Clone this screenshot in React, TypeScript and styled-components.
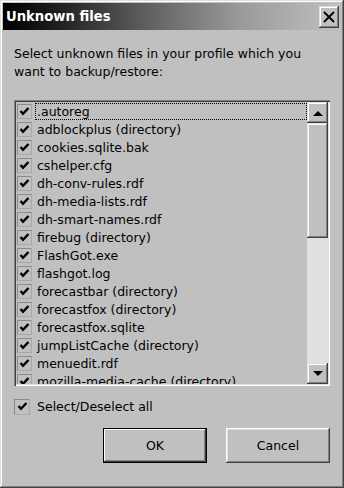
import React from 'react'
import styled, { createGlobalStyle } from 'styled-components'

const GlobalStyle = createGlobalStyle`
    html, body {
        margin: 0;
        padding: 0;
        background: #c0c0c0;
    }
    * { box-sizing: border-box; }
`

const raised = `
    box-shadow: inset -1px -1px #404040, inset 1px 1px #dfdfdf, inset -2px -2px #808080, inset 2px 2px #ffffff;
`

const Window = styled.div`
    width: 344px;
    height: 488px;
    padding: 3px;
    background: #c0c0c0;
    display: flex;
    flex-direction: column;
    font-family: "DejaVu Sans", "Liberation Sans", sans-serif;
    font-size: 12.5px;
    color: #000;
    ${raised}
`

const TitleBar = styled.div`
    height: 27px;
    display: flex;
    align-items: center;
    justify-content: space-between;
    padding: 0 2px 0 3px;
    background: linear-gradient(to right, #000000 0%, #1c1c1c 15%, #5a5a5a 40%, #9a9a9a 70%, #c0c0c0 100%);
`

const Title = styled.span`
    color: #fff;
    font-weight: bold;
    font-size: 13.2px;
`

const CloseButton = styled.div`
    width: 20px;
    height: 22px;
    background: #c0c0c0;
    display: flex;
    align-items: center;
    justify-content: center;
    ${raised}
`

const Content = styled.div`
    flex: 1;
    display: flex;
    flex-direction: column;
    padding: 15px 11px 0 11px;
`

const Prompt = styled.p`
    margin: 0;
    line-height: 18px;
`

const ListBox = styled.div`
    margin-top: 19px;
    height: 286px;
    padding: 2px;
    display: flex;
    box-shadow: inset 1px 1px #808080, inset 2px 2px #404040, inset -1px -1px #ffffff, inset -2px -2px #dfdfdf;
`

const Rows = styled.div`
    flex: 1;
    overflow: hidden;
`

const Row = styled.div`
    height: 18px;
    display: flex;
    align-items: center;
    padding-left: 1px;
`

const Box = styled.span<{ $size?: number }>`
    width: ${p => p.$size ?? 15}px;
    height: ${p => p.$size ?? 15}px;
    flex: none;
    display: flex;
    align-items: center;
    justify-content: center;
    border: 1px solid #8c8c8c;
    border-right-color: #a8a8a8;
    border-bottom-color: #a8a8a8;
`

const Label = styled.span<{ $focused?: boolean }>`
    flex: 1;
    height: 17px;
    margin-left: 3px;
    padding-left: 1px;
    display: flex;
    align-items: center;
    white-space: nowrap;
    border: 1px dotted ${p => (p.$focused ? '#000' : 'transparent')};
`

const ScrollBar = styled.div`
    width: 21px;
    display: flex;
    flex-direction: column;
`

const ScrollButton = styled.div`
    height: 21px;
    flex: none;
    background: #c0c0c0;
    display: flex;
    align-items: center;
    justify-content: center;
    ${raised}
`

const Thumb = styled.div`
    height: 115px;
    flex: none;
    background: #c0c0c0;
    ${raised}
`

const Track = styled.div`
    flex: 1;
    background: #e0e0e0;
`

const SelectAll = styled.div`
    margin-top: 12px;
    height: 17px;
    display: flex;
    align-items: center;
    gap: 7px;
`

const Buttons = styled.div`
    margin-top: 13px;
    display: flex;
    justify-content: flex-end;
    gap: 19px;
`

const Button = styled.div<{ $default?: boolean }>`
    width: 104px;
    height: 35px;
    display: flex;
    align-items: center;
    justify-content: center;
    background: #c0c0c0;
    box-shadow: ${p =>
        p.$default
            ? 'inset 0 0 0 1px #000, inset -2px -2px #404040, inset 2px 2px #ffffff, inset -3px -3px #808080'
            : 'inset -1px -1px #404040, inset 1px 1px #ffffff, inset -2px -2px #808080, inset 2px 2px #dfdfdf'};
`

const Check = () => (
    <svg width="11" height="11" viewBox="0 0 11 11">
        <path d="M1.5 5 L4 7.8 L9.5 2" fill="none" stroke="#000" strokeWidth="2.4" />
    </svg>
)

const files = [
    '.autoreg',
    'adblockplus (directory)',
    'cookies.sqlite.bak',
    'cshelper.cfg',
    'dh-conv-rules.rdf',
    'dh-media-lists.rdf',
    'dh-smart-names.rdf',
    'firebug (directory)',
    'FlashGot.exe',
    'flashgot.log',
    'forecastbar (directory)',
    'forecastfox (directory)',
    'forecastfox.sqlite',
    'jumpListCache (directory)',
    'menuedit.rdf',
    'mozilla-media-cache (directory)',
]

const App = () => {
    return (
        <>
            <GlobalStyle />
            <Window>
                <TitleBar>
                    <Title>Unknown files</Title>
                    <CloseButton>
                        <svg width="12" height="12" viewBox="0 0 12 12">
                            <path d="M1 1 L11 11 M11 1 L1 11" stroke="#000" strokeWidth="1.8" />
                        </svg>
                    </CloseButton>
                </TitleBar>
                <Content>
                    <Prompt>
                        Select unknown files in your profile which you
                        <br />
                        want to backup/restore:
                    </Prompt>
                    <ListBox>
                        <Rows>
                            {files.map((f, i) => (
                                <Row key={f}>
                                    <Box><Check /></Box>
                                    <Label $focused={i === 0}>{f}</Label>
                                </Row>
                            ))}
                        </Rows>
                        <ScrollBar>
                            <ScrollButton>
                                <svg width="10" height="6" viewBox="0 0 10 6"><path d="M0 6 L5 1 L10 6 Z" fill="#000" /></svg>
                            </ScrollButton>
                            <Thumb />
                            <Track />
                            <ScrollButton>
                                <svg width="10" height="6" viewBox="0 0 10 6"><path d="M0 0 L10 0 L5 5 Z" fill="#000" /></svg>
                            </ScrollButton>
                        </ScrollBar>
                    </ListBox>
                    <SelectAll>
                        <Box $size={16}><Check /></Box>
                        <span>Select/Deselect all</span>
                    </SelectAll>
                    <Buttons>
                        <Button $default>OK</Button>
                        <Button>Cancel</Button>
                    </Buttons>
                </Content>
            </Window>
        </>
    )
}

export default App
